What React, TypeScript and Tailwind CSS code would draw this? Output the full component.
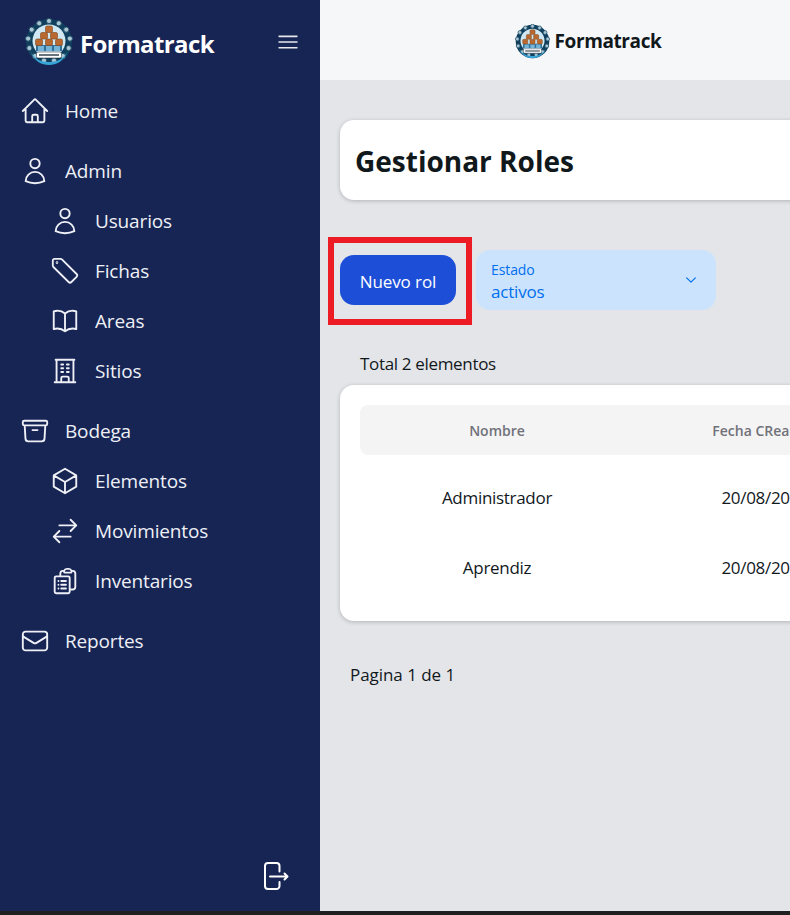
import React from 'react';
import {
  HiOutlineArchiveBox,
  HiOutlineArrowsRightLeft,
  HiOutlineBars3,
  HiOutlineBookOpen,
  HiOutlineBuildingOffice,
  HiOutlineChevronDown,
  HiOutlineClipboardDocumentList,
  HiOutlineCube,
  HiOutlineEnvelope,
  HiOutlineHome,
  HiOutlineUser,
} from 'react-icons/hi2';

const boxes = [
  [20.5, 8], [15.5, 14.5], [25.5, 14.5], [10.5, 21], [20.5, 21], [30.5, 21],
];
const gears = Array.from({ length: 13 }, (_, i) => {
  const a = (Math.PI * 2 * i) / 13 - Math.PI / 2;
  return [24 + 21 * Math.cos(a), 23 + 20 * Math.sin(a)];
});

const Logo = ({ className }: { className: string }) => (
  <svg viewBox="0 0 48 48" className={className}>
    <circle cx="24" cy="24" r="23" fill="#0f3f5c" />
    {gears.map(([x, y], i) => (
      <circle key={i} cx={x} cy={y} r="2.6" fill="#a9c6d4" stroke="#234f68" strokeWidth="1" />
    ))}
    <circle cx="24" cy="23" r="16.5" fill="#cfe8f3" />
    <path d="M5 33 C10 44 17 47 24 47 C31 47 38 44 43 33 C38 42 31 44 24 44 C17 44 10 42 5 33Z" fill="#38a5d8" />
    <rect x="11" y="27" width="26" height="6" fill="#2f6f9b" />
    <rect x="13" y="28" width="6" height="5" fill="#75b4d6" />
    <rect x="21" y="28" width="6" height="5" fill="#75b4d6" />
    <rect x="29" y="28" width="6" height="5" fill="#75b4d6" />
    {boxes.map(([x, y], i) => (
      <rect key={i} x={x} y={y} width="7" height="6.5" rx="1.5" fill="#b9692f" stroke="#7f4519" strokeWidth="0.6" />
    ))}
    <rect x="11.5" y="34" width="25" height="6" rx="1.5" fill="#ffffff" stroke="#123" strokeWidth="0.5" />
    <rect x="14" y="36.2" width="20" height="1.6" fill="#44525c" />
  </svg>
);

const LogoutIcon = () => (
  <svg viewBox="0 0 30 30" fill="none" stroke="currentColor" strokeWidth="2" strokeLinecap="round" strokeLinejoin="round" className="size-[30px]">
    <path d="M17.5 10.5V5a3 3 0 0 0-3-3H6a3 3 0 0 0-3 3v20a3 3 0 0 0 3 3h8.5a3 3 0 0 0 3-3v-4" />
    <path d="M8 15.5h17M22.5 12.5l3 3-3 3" />
  </svg>
);

const TagIcon = () => (
  <svg viewBox="0 0 30 30" fill="none" stroke="currentColor" strokeWidth="1.8" strokeLinecap="round" strokeLinejoin="round" className="size-[30px] shrink-0">
    <path d="M4.5 2.8h6a2 2 0 0 1 1.4.6L26.6 18a2 2 0 0 1 0 2.8l-5.2 5.2a2 2 0 0 1-2.8 0L3.4 11a2 2 0 0 1-.6-1.4V4.5a1.7 1.7 0 0 1 1.7-1.7Z" />
    <circle cx="7" cy="6.6" r="0.4" />
  </svg>
);

type NavItem = { label: string; icon: React.ReactNode; sub?: boolean };

const iconClass = 'size-[30px] stroke-[1.5] shrink-0';

const groups: NavItem[][] = [
  [{ label: 'Home', icon: <HiOutlineHome className={iconClass} /> }],
  [
    { label: 'Admin', icon: <HiOutlineUser className={iconClass} /> },
    { label: 'Usuarios', icon: <HiOutlineUser className={iconClass} />, sub: true },
    { label: 'Fichas', icon: <TagIcon />, sub: true },
    { label: 'Areas', icon: <HiOutlineBookOpen className={iconClass} />, sub: true },
    { label: 'Sitios', icon: <HiOutlineBuildingOffice className={iconClass} />, sub: true },
  ],
  [
    { label: 'Bodega', icon: <HiOutlineArchiveBox className={iconClass} /> },
    { label: 'Elementos', icon: <HiOutlineCube className={iconClass} />, sub: true },
    { label: 'Movimientos', icon: <HiOutlineArrowsRightLeft className={iconClass} />, sub: true },
    { label: 'Inventarios', icon: <HiOutlineClipboardDocumentList className={iconClass} />, sub: true },
  ],
  [{ label: 'Reportes', icon: <HiOutlineEnvelope className={iconClass} /> }],
];

const Sidebar = () => (
  <aside className="flex flex-col w-[320px] shrink-0 h-full bg-[#172554] text-white">
    <div className="flex items-center justify-between h-[86px] pl-[25px] pr-[19px] pb-[2px]">
      <div className="flex items-center gap-[7px]">
        <Logo className="size-[48px]" />
        <span className="text-[24px] font-bold tracking-[-0.6px] mt-[3px]">Formatrack</span>
      </div>
      <HiOutlineBars3 className="size-[26px] stroke-[1.5] text-[#e5e7eb]" />
    </div>
    <nav className="flex flex-col gap-[10px]">
      {groups.map((group) => (
        <ul key={group[0].label} className="flex flex-col">
          {group.map((item) => (
            <li
              key={item.label}
              className={`flex items-center gap-[15px] h-[50px] text-[19px] tracking-[-0.15px] text-[#eef0f6] ${item.sub ? 'pl-[50px]' : 'pl-[20px]'}`}
            >
              {item.icon}
              {item.label}
            </li>
          ))}
        </ul>
      ))}
    </nav>
    <div className="mt-auto flex justify-end pr-[28px] pb-[20px]">
      <LogoutIcon />
    </div>
  </aside>
);

const rows = ['Administrador', 'Aprendiz'];

const Main = () => (
  <main className="flex-1 min-w-0 h-full bg-[#e4e5e9] overflow-hidden">
    <header className="h-[80px] bg-[#f6f7f9]">
      <div className="flex items-center justify-center gap-[5px] w-[536px] h-full pt-[2px]">
        <Logo className="size-[35px]" />
        <span className="text-[19px] font-bold tracking-[-0.4px] text-[#11181c]">Formatrack</span>
      </div>
    </header>
    <div className="w-[600px] pl-[20px] pt-[40px]">
      <div className="flex items-center h-[80px] pl-[15px] pt-[2px] bg-white rounded-[14px] shadow-[0_1px_4px_rgba(0,0,0,0.22)]">
        <h1 className="text-[28px] font-bold text-[#11181c]">Gestionar Roles</h1>
      </div>
      <div className="relative flex items-center gap-[20px] mt-[50px] h-[60px]">
        <button className="w-[116px] h-[50px] pt-[3px] rounded-[14px] bg-[#1d4ed8] text-white text-[17px] tracking-[-0.1px]">
          Nuevo rol
        </button>
        <div className="flex items-center justify-between w-[240px] h-[60px] pl-[15px] pr-[18px] rounded-[14px] bg-[#cce3fd] text-[#006fee]">
          <div className="flex flex-col pt-[4px]">
            <span className="text-[14px] leading-[20px] tracking-[-0.1px]">Estado</span>
            <span className="text-[17px] leading-[24px] tracking-[-0.2px]">activos</span>
          </div>
          <HiOutlineChevronDown className="size-[14px] stroke-[2]" />
        </div>
        <div className="absolute left-[-12px] top-[-13px] w-[144px] h-[88px] border-[6px] border-[#ed1c24]" />
      </div>
      <p className="mt-[42px] pl-[20px] text-[17px] leading-[24px] tracking-[-0.33px] text-[#11181c]">Total 2 elementos</p>
      <div className="mt-[9px] h-[236px] p-[20px] bg-white rounded-[14px] shadow-[0_1px_4px_rgba(0,0,0,0.22)]">
        <div className="grid grid-cols-[274px_262px] items-center h-[50px] rounded-[8px] bg-[#f4f4f5] text-[14px] font-semibold text-[#71717a] text-center">
          <span>Nombre</span>
          <span className="whitespace-nowrap">Fecha CReacion</span>
        </div>
        <div className="mt-[8px]">
          {rows.map((name) => (
            <div key={name} className="grid grid-cols-[274px_262px] items-center h-[70px] text-[17px] tracking-[-0.3px] text-[#11181c] text-center">
              <span>{name}</span>
              <span>20/08/2025</span>
            </div>
          ))}
        </div>
      </div>
      <p className="mt-[42px] pl-[10px] text-[17px] leading-[24px] tracking-[-0.05px] text-[#11181c]">Pagina 1 de 1</p>
    </div>
  </main>
);

const App = () => (
  <div className="flex flex-col w-[790px] h-[915px] overflow-hidden font-['Open_Sans','Noto_Sans',sans-serif]">
    <div className="flex flex-1 min-h-0">
      <Sidebar />
      <Main />
    </div>
    <div className="h-[4px] bg-[#202020]" />
  </div>
);

export default App;
